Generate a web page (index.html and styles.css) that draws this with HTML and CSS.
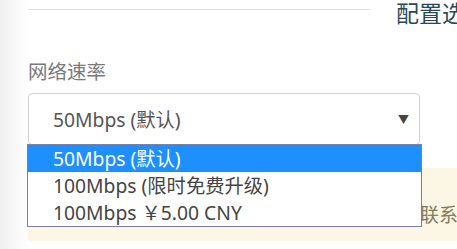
FILE: index.html
```html
<!DOCTYPE html>
<html lang="zh-CN">
<head>
<meta charset="utf-8">
<link rel="stylesheet" href="styles.css">
</head>
<body>
<div class="page">
  <div class="head">
    <div class="rule"></div>
    <h2 class="title">配置选项</h2>
  </div>
  <div class="main">
    <div class="label">网络速率</div>
    <div class="select">
      <span class="value">50Mbps (默认)</span>
      <span class="arrow">▼</span>
      <ul class="menu">
        <li class="opt active">50Mbps (默认)</li>
        <li class="opt">100Mbps (限时免费升级)</li>
        <li class="opt">100Mbps ￥5.00 CNY</li>
      </ul>
    </div>
    <div class="alert"><span class="alert-text">如有疑问，请联系我们</span></div>
  </div>
</div>
</body>
</html>
```

FILE: styles.css
```css
html, body {
  margin: 0;
  padding: 0;
}
body {
  width: 457px;
  height: 249px;
  overflow: hidden;
  background: linear-gradient(to right, #efefef 0px, #f8f8f8 14px, #ffffff 30px);
  font-family: "Noto Sans", "Noto Sans CJK SC", sans-serif;
}
.page {
  padding-left: 28px;
}
.head {
  display: flex;
  align-items: flex-start;
  height: 40px;
}
.rule {
  width: 342px;
  margin-top: 9px;
  border-top: 1px solid #e4e4e4;
  flex: none;
}
.title {
  margin: 0 0 0 26px;
  font-weight: normal;
  font-size: 23px;
  line-height: 24px;
  color: #2b4a57;
  white-space: nowrap;
  font-family: "Noto Sans CJK SC", sans-serif;
}
.main {
  width: 392px;
}
.label {
  margin-top: 20px;
  font-size: 19.5px;
  line-height: 22px;
  color: #7a7a7a;
  font-family: "Noto Sans CJK SC", sans-serif;
}
.select {
  position: relative;
  margin-top: 11px;
  border: 1px solid #d2d2d2;
  border-radius: 4px;
  box-sizing: border-box;
  height: 52px;
  display: flex;
  align-items: center;
  justify-content: space-between;
  padding: 0 10px 0 24px;
  background: #fff;
  font-size: 19.3px;
  color: #555;
}
.arrow {
  font-size: 11px;
  color: #444;
}
.menu {
  position: absolute;
  top: 50px;
  left: -2px;
  width: 393px;
  margin: 0;
  padding: 0;
  list-style: none;
  border: 1px solid #7c80a4;
  background: #fff;
  z-index: 2;
}
.opt {
  height: 27px;
  line-height: 27px;
  padding-left: 25px;
  font-size: 19.3px;
  color: #454545;
}
.opt.active {
  background: #1e8fff;
  color: #fff;
}
.alert {
  margin-top: 23px;
  width: 440px;
  height: 73px;
  box-sizing: border-box;
  background: #fbf7e4;
  border-radius: 4px;
  padding: 35px 0 0 278px;
  font-size: 19px;
  line-height: 22px;
  color: #847a5e;
  font-family: "Noto Sans CJK SC", sans-serif;
  white-space: nowrap;
}
```
